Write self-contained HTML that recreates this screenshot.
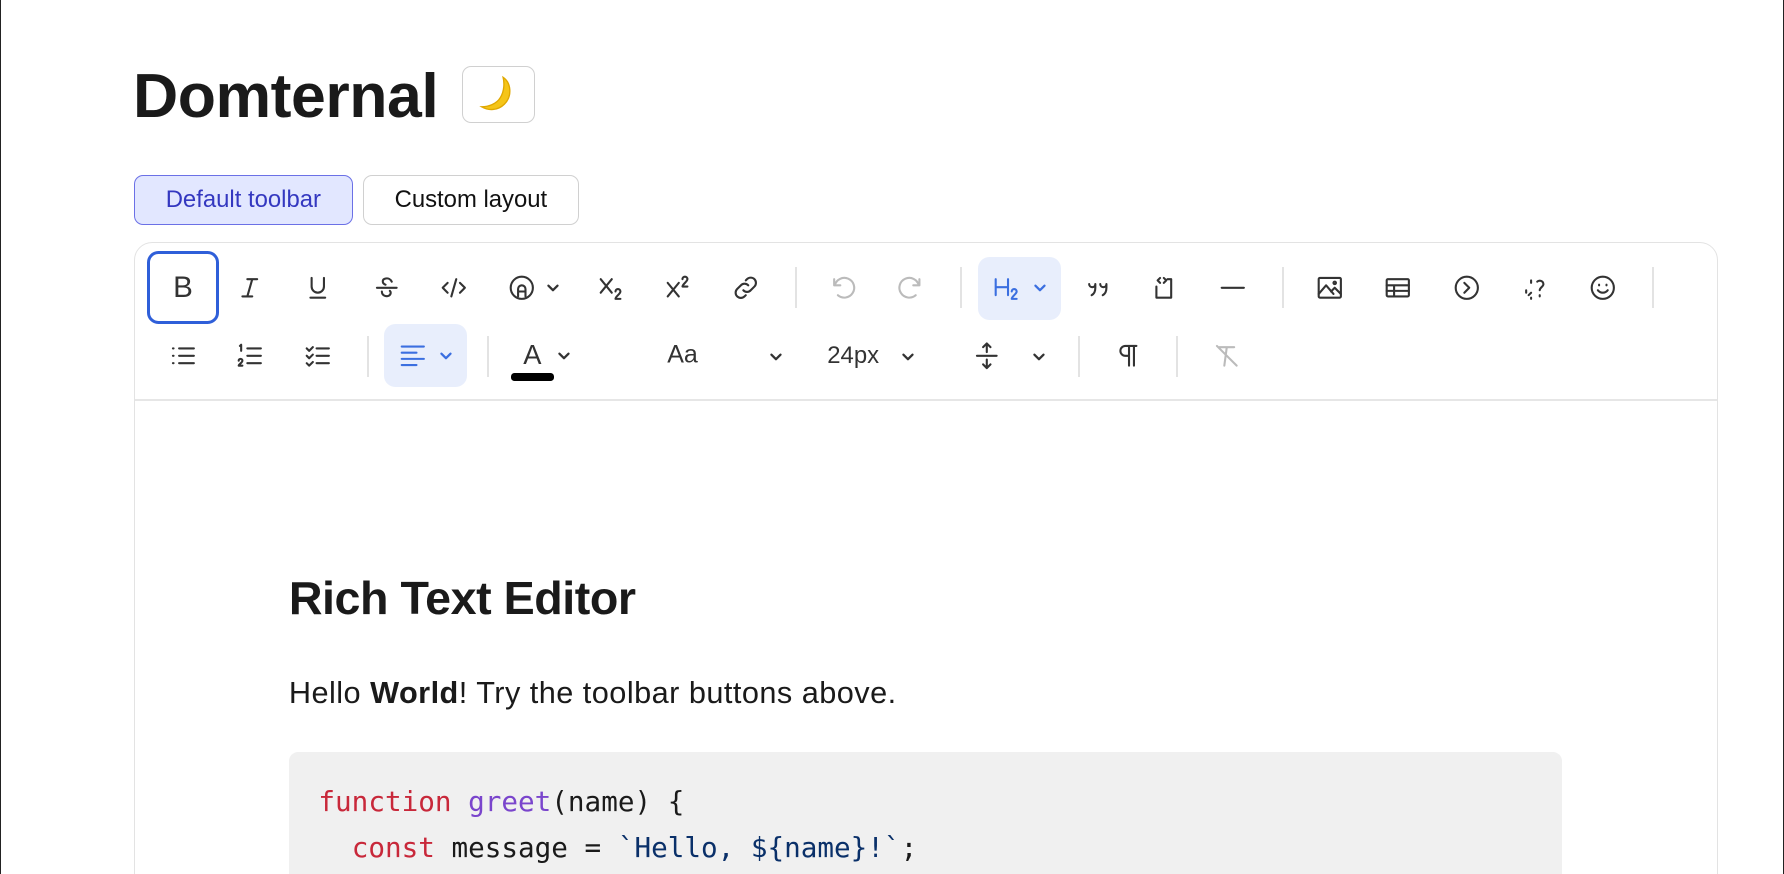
<!DOCTYPE html>
<html><head><meta charset="utf-8"><style>
html,body{margin:0;padding:0;background:#fff;overflow:hidden}
body{width:1784px;height:874px}
#w{zoom:1.13776;width:1568px;height:768px;position:relative;overflow:hidden;font-family:"Liberation Sans",sans-serif;color:#1a1a1a;border-left:1px solid #222;border-right:1px solid #222;box-sizing:border-box}
.a{position:absolute}
h1{position:absolute;left:116px;top:52px;margin:0;font-size:55px;font-weight:bold;letter-spacing:-0.4px;line-height:66px}
.moon{left:405px;top:58px;width:64px;height:50px;border:1.5px solid #d0d0d0;border-radius:8px;box-sizing:border-box;display:flex;align-items:center;justify-content:center}
.tab{top:154px;height:44px;border-radius:8px;box-sizing:border-box;font-size:21px;display:flex;align-items:center;justify-content:center}
.ed{left:117px;top:213px;width:1392px;height:600px;border:1.5px solid #e3e3e3;border-radius:16px;box-sizing:border-box}
.ic{position:absolute;width:26px;height:26px;margin:-13px 0 0 -13px}
.ic svg{width:26px;height:26px;fill:none;stroke:#333;stroke-width:1.7;stroke-linecap:round;stroke-linejoin:round}
.sep{position:absolute;width:1.5px;height:36px;background:#e3e3e3}
.chev{position:absolute;width:14px;height:14px;margin:-7px 0 0 -7px}
.chev svg{width:14px;height:14px;fill:none;stroke:#333;stroke-width:2;stroke-linecap:round;stroke-linejoin:round}
.t{position:absolute;font-size:22px;color:#333;transform:translate(-50%,-50%)}
pre{margin:0;font-family:"DejaVu Sans Mono","Liberation Mono",monospace;font-size:24.3px;line-height:40px}
</style></head><body><div id="w">
<h1>Domternal</h1>
<div class="a moon"><svg width="40" height="40" viewBox="0 0 34 34"><path d="M21 4c6 4 7 14 1 20-5 5-12 5-17 2 5 0 11-2 14-7 3-5 3-11 2-15z" fill="#f5c518" stroke="#e0a800" stroke-width="1"/></svg></div>
<div class="a tab" style="left:117px;width:192px;background:#e2e7ff;border:1.5px solid #6b70e6;color:#3438c0">Default toolbar</div>
<div class="a tab" style="left:318px;width:190px;background:#fff;border:1.5px solid #d0d0d0;color:#111">Custom layout</div>
<div class="a ed"></div>
<div class="a" style="left:118px;top:351px;width:1390px;height:1.5px;background:#e6e6e6"></div>
<!-- row1 -->
<div class="a" style="left:128px;top:221px;width:64px;height:64px;border:3px solid #2f5fd9;border-radius:10px;box-sizing:border-box"></div>
<div class="t" style="left:160px;top:253px;font-size:26px">B</div>
<div class="ic" style="left:219px;top:253px"><svg viewBox="0 0 24 24"><path d="M10 5h8M6 19h8M14 5l-4 14"/></svg></div>
<div class="ic" style="left:278px;top:253px"><svg viewBox="0 0 24 24"><path d="M7 4v7a5 5 0 0 0 10 0V4M6 20h12"/></svg></div>
<div class="ic" style="left:339px;top:253px"><svg viewBox="0 0 24 24"><path d="M4 12h16M16 7c-1-2-3-3-5-2.5-3 .5-3 4 0 5M8 15c0 3 3 4.5 5.5 3.5 2-1 2-3 1-4"/></svg></div>
<div class="ic" style="left:398px;top:253px"><svg viewBox="0 0 24 24"><path d="M7 8l-4 4 4 4M17 8l4 4-4 4M14 5l-4 14"/></svg></div>
<div class="ic" style="left:458px;top:253px"><svg viewBox="0 0 24 24"><circle cx="12" cy="12" r="9"/><path d="M9 19v-6a3 3 0 0 1 6 0v6M9 15h6"/></svg></div>
<div class="chev" style="left:485px;top:253px"><svg viewBox="0 0 14 14"><path d="M3 5l4 4 4-4"/></svg></div>
<div class="ic" style="left:537px;top:253px"><svg viewBox="0 0 24 24"><path d="M3 5l9 11M12 5L3 16M15 15a2 2 0 0 1 4 0c0 2-4 4-4 6h4"/></svg></div>
<div class="ic" style="left:596px;top:253px"><svg viewBox="0 0 24 24"><path d="M3 8l9 11M12 8L3 19M15 5a2 2 0 0 1 4 0c0 2-4 4-4 6h4"/></svg></div>
<div class="ic" style="left:655px;top:253px"><svg viewBox="0 0 24 24"><path d="M10 14a4 4 0 0 0 6 0l3-3a4 4 0 0 0-6-6l-1 1M14 10a4 4 0 0 0-6 0l-3 3a4 4 0 0 0 6 6l1-1"/></svg></div>
<div class="sep" style="left:698px;top:235px"></div>
<div class="ic" style="left:740px;top:253px"><svg viewBox="0 0 24 24" style="stroke:#bbb"><path d="M5 5v5h5M5.5 10A8 8 0 1 1 8 18"/></svg></div>
<div class="ic" style="left:800px;top:253px"><svg viewBox="0 0 24 24" style="stroke:#bbb"><path d="M19 5v5h-5M18.5 10A8 8 0 1 0 16 18"/></svg></div>
<div class="sep" style="left:843px;top:235px"></div>
<div class="a" style="left:859px;top:226px;width:73px;height:55px;background:#e8eefc;border-radius:10px"></div>
<div class="ic" style="left:884px;top:253px"><svg viewBox="0 0 24 24" style="stroke:#3b6fe0"><path d="M3 5v13M13 5v13M3 11.5h10M16 15a2 2 0 0 1 4 0c0 2-4 4-4 6h4"/></svg></div>
<div class="chev" style="left:913px;top:253px"><svg viewBox="0 0 14 14" style="stroke:#3b6fe0"><path d="M3 5l4 4 4-4"/></svg></div>
<div class="ic" style="left:964px;top:253px"><svg viewBox="0 0 24 24"><path d="M5 9a2.5 2.5 0 1 0 5 0v3c0 3-1 5-3 6M14 9a2.5 2.5 0 1 0 5 0v3c0 3-1 5-3 6"/></svg></div>
<div class="ic" style="left:1022px;top:253px"><svg viewBox="0 0 24 24"><path d="M6 11v9h12V5h-3M9 4l-2 2 2 2M12 4l2 2-2 2"/></svg></div>
<div class="ic" style="left:1083px;top:253px"><svg viewBox="0 0 24 24"><path d="M3 12h18"/></svg></div>
<div class="sep" style="left:1126px;top:235px"></div>
<div class="ic" style="left:1168px;top:253px"><svg viewBox="0 0 24 24"><rect x="3" y="4" width="18" height="16" rx="1"/><path d="M3 17l6-7 6 7M13 15l3-3 5 5"/><circle cx="16" cy="8" r="1"/></svg></div>
<div class="ic" style="left:1228px;top:253px"><svg viewBox="0 0 24 24"><rect x="3" y="5" width="18" height="14" rx="1"/><path d="M3 10h18M3 14.5h18M9 10v9"/></svg></div>
<div class="ic" style="left:1288px;top:253px"><svg viewBox="0 0 24 24"><circle cx="12" cy="12" r="9"/><path d="M10 8l4 4-4 4"/></svg></div>
<div class="ic" style="left:1348px;top:253px"><svg viewBox="0 0 24 24"><path d="M14 7a3 3 0 0 1 5 2c0 2-3 3-3 5M16 18v1M9 6v2M5 14v2M7 18l2-2M9 20v1"/></svg></div>
<div class="ic" style="left:1408px;top:253px"><svg viewBox="0 0 24 24"><circle cx="12" cy="12" r="9"/><path d="M8 14a5 5 0 0 0 8 0M9 9.5v.5M15 9.5v.5"/></svg></div>
<div class="sep" style="left:1451px;top:235px"></div>
<!-- row2 -->
<div class="ic" style="left:160px;top:313px"><svg viewBox="0 0 24 24"><path d="M9 6h12M9 12h12M9 18h12M4 6h.5M4 12h.5M4 18h.5"/></svg></div>
<div class="ic" style="left:219px;top:313px"><svg viewBox="0 0 24 24"><path d="M10 6h11M10 12h11M10 18h11M4 4l1-1v5M3 16a1.5 1.5 0 0 1 3 0c0 1.5-3 3-3 4h3"/></svg></div>
<div class="ic" style="left:278px;top:313px"><svg viewBox="0 0 24 24"><path d="M11 6h10M11 12h10M11 18h10M3 6l2 2 3-3M3 12l2 2 3-3M3 18l2 2 3-3"/></svg></div>
<div class="sep" style="left:322px;top:295px"></div>
<div class="a" style="left:337px;top:285px;width:73px;height:55px;background:#e8eefc;border-radius:10px"></div>
<div class="ic" style="left:362px;top:313px"><svg viewBox="0 0 24 24" style="stroke:#3b6fe0"><path d="M3 6h18M3 11h12M3 16h18M3 21h12" transform="translate(0,-1.5)"/></svg></div>
<div class="chev" style="left:391px;top:313px"><svg viewBox="0 0 14 14" style="stroke:#3b6fe0"><path d="M3 5l4 4 4-4"/></svg></div>
<div class="sep" style="left:427px;top:295px"></div>
<div class="t" style="left:467px;top:312px;font-size:24px">A</div>
<div class="a" style="left:448px;top:328px;width:38px;height:7px;background:#000;border-radius:3px"></div>
<div class="chev" style="left:495px;top:313px"><svg viewBox="0 0 14 14"><path d="M3 5l4 4 4-4"/></svg></div>
<div class="t" style="left:599px;top:312px;font-size:22px">Aa</div>
<div class="chev" style="left:681px;top:314px"><svg viewBox="0 0 14 14"><path d="M3 5l4 4 4-4"/></svg></div>
<div class="t" style="left:749px;top:313px;font-size:21px">24px</div>
<div class="chev" style="left:797px;top:314px"><svg viewBox="0 0 14 14"><path d="M3 5l4 4 4-4"/></svg></div>
<div class="ic" style="left:866px;top:313px"><svg viewBox="0 0 24 24"><path d="M12 2v7M9 5l3-3 3 3M4 12h16M12 15v7M9 19l3 3 3-3"/></svg></div>
<div class="chev" style="left:912px;top:314px"><svg viewBox="0 0 14 14"><path d="M3 5l4 4 4-4"/></svg></div>
<div class="sep" style="left:947px;top:295px"></div>
<div class="ic" style="left:990px;top:313px"><svg viewBox="0 0 24 24"><path d="M13 4v16M17 4v16M19 4h-9a4 4 0 0 0 0 8h3"/></svg></div>
<div class="sep" style="left:1033px;top:295px"></div>
<div class="ic" style="left:1077px;top:313px"><svg viewBox="0 0 24 24" style="stroke:#bbb"><path d="M6 5h12M12 5l-2 15M4 4l16 16"/></svg></div>
<!-- content -->
<div class="a" style="left:253px;top:502px;font-size:41px;font-weight:bold;letter-spacing:-0.4px">Rich Text Editor</div>
<div class="a" style="left:253px;top:593px;font-size:27px;letter-spacing:0.4px">Hello <b>World</b>! Try the toolbar buttons above.</div>
<div class="a" style="left:253px;top:661px;width:1119px;height:107px;background:#f0f0f0;border-radius:8px 8px 0 0"></div>
<pre class="a" style="left:279px;top:685px"><span style="color:#c8283a">function</span> <span style="color:#7a45cc">greet</span>(name) {
  <span style="color:#c8283a">const</span> message = <span style="color:#0a3069">`Hello, ${name}!`</span>;</pre>
</div></body></html>
